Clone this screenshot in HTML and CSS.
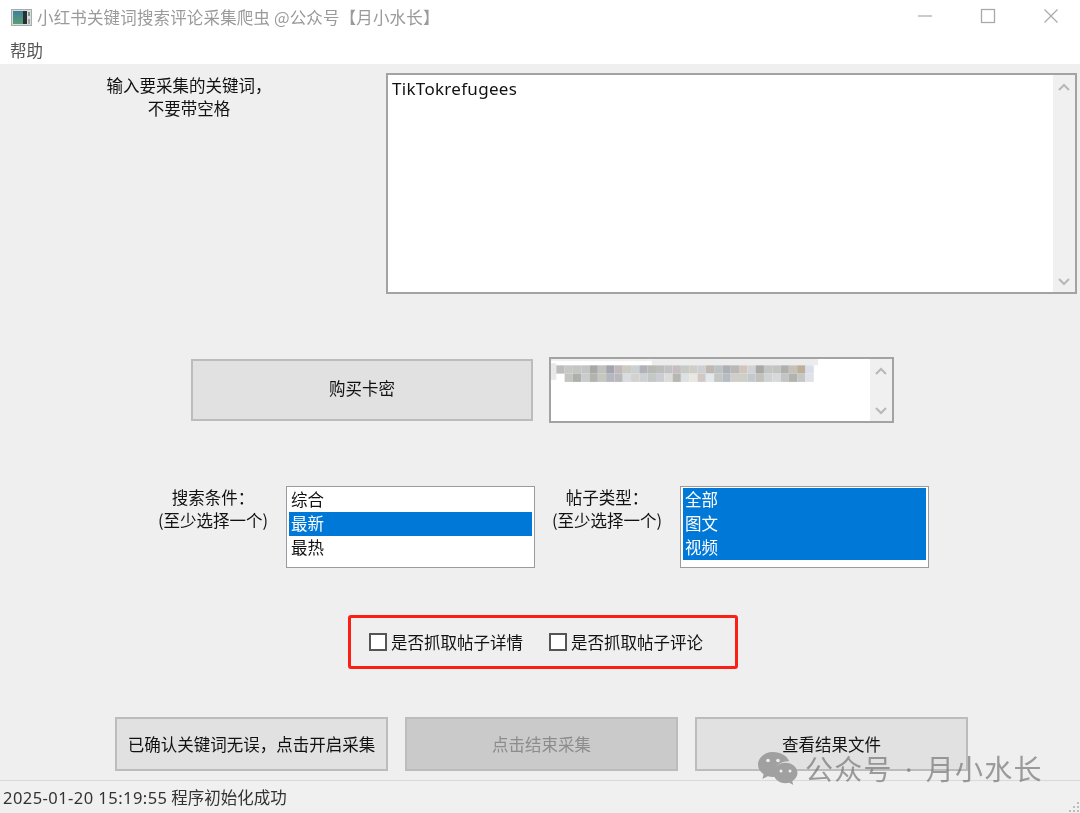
FILE: index.html
```html
<!DOCTYPE html>
<html lang="zh-CN">
<head>
<meta charset="utf-8">
<title>小红书关键词搜索评论采集爬虫</title>
<link rel="stylesheet" href="styles.css">
</head>
<body>
<div class="window">
  <header class="titlebar">
    <svg class="app-icon" width="21" height="17" viewBox="0 0 21 17"><defs><linearGradient id="ig" x1="0" y1="0" x2="0" y2="1"><stop offset="0" stop-color="#3f7fa0"/><stop offset="1" stop-color="#58a070"/></linearGradient></defs><rect x="0.5" y="0.5" width="20" height="16" fill="#d8dcdc" stroke="#a4acae"/><rect x="2" y="2" width="10" height="13" fill="url(#ig)"/><rect x="12" y="2" width="4" height="13" fill="#2a3032"/><rect x="17" y="3" width="2" height="4" fill="#7a9a8c"/><rect x="17" y="10" width="2" height="5" fill="#9aa4a0"/></svg>
    <span class="title-text">小红书关键词搜索评论采集爬虫 @公众号【月小水长】</span>
    <div class="win-controls">
      <svg width="16" height="16" viewBox="0 0 16 16"><path d="M1 8H15" stroke="#a9a9a9" stroke-width="1.2" fill="none"/></svg>
      <svg width="16" height="16" viewBox="0 0 16 16"><rect x="1.5" y="1.5" width="13" height="13" stroke="#a9a9a9" stroke-width="1.3" fill="none"/></svg>
      <svg width="16" height="16" viewBox="0 0 16 16"><path d="M1.500 1.500L14.500 14.500M14.500 1.500L1.500 14.500" stroke="#a9a9a9" stroke-width="1.2" fill="none"/></svg>
    </div>
  </header>
  <nav class="menubar"><span>帮助</span></nav>

  <main class="content">
    <section class="row row-keyword">
      <div class="caption caption-keyword">输入要采集的关键词，<br>不要带空格</div>
      <div class="field field-keyword">
        <div class="field-text">TikTokrefugees</div>
        <div class="scrollbar">
          <svg width="12" height="8" viewBox="0 0 12 8"><path d="M1 7L6 2L11 7" stroke="#b8b8b8" stroke-width="2" fill="none"/></svg>
          <svg width="12" height="8" viewBox="0 0 12 8"><path d="M1 1L6 6L11 1" stroke="#b8b8b8" stroke-width="2" fill="none"/></svg>
        </div>
      </div>
    </section>

    <section class="row row-license">
      <button class="btn btn-buy">购买卡密</button>
      <div class="field field-license">
        <svg class="mosaic" width="272" height="27" viewBox="0 0 262 26">
          <rect x="0" y="0" width="100" height="4" fill="#f0f0f0"/>
          <rect x="100" y="2" width="160" height="6" fill="#ececec"/>
          <rect x="0" y="6" width="8" height="16" fill="#e8e8e8"/>
          <g class="mosaic-cells">
            <rect x="8" y="8" width="8" height="8" fill="#c0bbbb"/><rect x="16" y="8" width="8" height="8" fill="#c6c8c5"/><rect x="24" y="8" width="8" height="8" fill="#c4c6c3"/><rect x="32" y="8" width="8" height="8" fill="#c3c5c3"/><rect x="40" y="8" width="8" height="8" fill="#a8a8a6"/><rect x="48" y="8" width="8" height="8" fill="#bfc2bf"/><rect x="56" y="8" width="8" height="8" fill="#a3a5ae"/><rect x="64" y="8" width="8" height="8" fill="#c0b8bc"/><rect x="72" y="8" width="8" height="8" fill="#cbcbc0"/><rect x="80" y="8" width="8" height="8" fill="#cad1d3"/><rect x="88" y="8" width="8" height="8" fill="#b0b1b9"/><rect x="96" y="8" width="8" height="8" fill="#b8b9b4"/><rect x="104" y="8" width="8" height="8" fill="#bcbebc"/><rect x="112" y="8" width="8" height="8" fill="#c0c2c4"/><rect x="120" y="8" width="8" height="8" fill="#c5bdc2"/><rect x="128" y="8" width="8" height="8" fill="#c6cbc8"/><rect x="136" y="8" width="8" height="8" fill="#d0ccc6"/><rect x="144" y="8" width="8" height="8" fill="#ccd0d2"/><rect x="152" y="8" width="8" height="8" fill="#c0b7b0"/><rect x="160" y="8" width="8" height="8" fill="#bcc1c4"/><rect x="168" y="8" width="8" height="8" fill="#adafb7"/><rect x="176" y="8" width="8" height="8" fill="#b8b8b4"/><rect x="184" y="8" width="8" height="8" fill="#d0c6bd"/><rect x="192" y="8" width="8" height="8" fill="#cfd3d3"/><rect x="200" y="8" width="8" height="8" fill="#a8a8a6"/><rect x="208" y="8" width="8" height="8" fill="#c3c5c3"/><rect x="216" y="8" width="8" height="8" fill="#c3c3c1"/><rect x="224" y="8" width="8" height="8" fill="#afb0ae"/><rect x="232" y="8" width="8" height="8" fill="#c3c1ba"/><rect x="240" y="8" width="8" height="8" fill="#bcae99"/><rect x="248" y="8" width="8" height="8" fill="#d8deea"/>
            <rect x="16" y="16" width="8" height="8" fill="#c3c5c1"/><rect x="24" y="16" width="8" height="8" fill="#aeb0ac"/><rect x="32" y="16" width="8" height="8" fill="#c8cccc"/><rect x="40" y="16" width="8" height="8" fill="#b2b2ae"/><rect x="48" y="16" width="8" height="8" fill="#c5c7c1"/><rect x="56" y="16" width="8" height="8" fill="#b6b6c0"/><rect x="64" y="16" width="8" height="8" fill="#b9b9bc"/><rect x="72" y="16" width="8" height="8" fill="#d9dce1"/><rect x="80" y="16" width="8" height="8" fill="#d5d1cf"/><rect x="88" y="16" width="8" height="8" fill="#cdd1d3"/><rect x="96" y="16" width="8" height="8" fill="#c3c7c5"/><rect x="104" y="16" width="8" height="8" fill="#cacdd1"/><rect x="112" y="16" width="8" height="8" fill="#dddcdd"/><rect x="120" y="16" width="8" height="8" fill="#b7b7b2"/><rect x="128" y="16" width="8" height="8" fill="#dde1e1"/><rect x="136" y="16" width="8" height="8" fill="#e8e7e3"/><rect x="144" y="16" width="8" height="8" fill="#d1c8c5"/><rect x="152" y="16" width="8" height="8" fill="#e1e9ed"/><rect x="160" y="16" width="8" height="8" fill="#c6c7c3"/><rect x="168" y="16" width="8" height="8" fill="#b6bcc4"/><rect x="176" y="16" width="8" height="8" fill="#d1cdc9"/><rect x="184" y="16" width="8" height="8" fill="#cfcfc9"/><rect x="192" y="16" width="8" height="8" fill="#c3c9cd"/><rect x="200" y="16" width="8" height="8" fill="#c3c1bb"/><rect x="208" y="16" width="8" height="8" fill="#cfd3d3"/><rect x="216" y="16" width="8" height="8" fill="#d9d9dd"/><rect x="224" y="16" width="8" height="8" fill="#c3c5c5"/><rect x="232" y="16" width="8" height="8" fill="#b2b2ae"/><rect x="240" y="16" width="8" height="8" fill="#c5c7c5"/><rect x="248" y="16" width="8" height="8" fill="#dfe1e7"/>
          </g>
        </svg>
        <div class="scrollbar">
          <svg width="12" height="8" viewBox="0 0 12 8"><path d="M1 7L6 2L11 7" stroke="#b8b8b8" stroke-width="2" fill="none"/></svg>
          <svg width="12" height="8" viewBox="0 0 12 8"><path d="M1 1L6 6L11 1" stroke="#b8b8b8" stroke-width="2" fill="none"/></svg>
        </div>
      </div>
    </section>

    <section class="row row-filters">
      <div class="caption caption-filter">搜索条件：<br>(至少选择一个)</div>
      <ul class="listbox">
        <li>综合</li>
        <li class="selected">最新</li>
        <li>最热</li>
      </ul>
      <div class="caption caption-filter caption-type">帖子类型：<br>(至少选择一个)</div>
      <ul class="listbox">
        <li class="selected">全部</li>
        <li class="selected">图文</li>
        <li class="selected">视频</li>
      </ul>
    </section>

    <section class="row row-checks">
      <div class="highlight">
        <label class="check"><span class="box"></span>是否抓取帖子详情</label>
        <label class="check"><span class="box"></span>是否抓取帖子评论</label>
      </div>
    </section>

    <section class="row row-actions">
      <button class="btn btn-action">已确认关键词无误，点击开启采集</button>
      <button class="btn btn-action btn-disabled">点击结束采集</button>
      <button class="btn btn-action">查看结果文件</button>
    </section>
  </main>

  <footer class="statusbar">
    <span><span class="stamp">2025-01-20 15:19:55</span> 程序初始化成功</span>
    <svg class="grip" width="12" height="12" viewBox="0 0 12 12"><g fill="#bdbdbd"><rect x="9" y="1" width="2" height="2"/><rect x="5" y="5" width="2" height="2"/><rect x="9" y="5" width="2" height="2"/><rect x="1" y="9" width="2" height="2"/><rect x="5" y="9" width="2" height="2"/><rect x="9" y="9" width="2" height="2"/></g></svg>
  </footer>

  <div class="watermark">
    <svg width="41" height="34" viewBox="0 0 41 34">
      <path d="M16 1C7.500 1 1 6.600 1 13.600c0 4 2.200 7.400 5.600 9.700L5.400 28l5.400-2.800c1.700.5 3.400.8 5.200.8.6 0 1.200 0 1.800-.1-.4-1.200-.6-2.500-.6-3.800 0-6.600 6.200-11.900 13.800-11.900.4 0 .8 0 1.200.1C30.300 5 23.700 1 16 1z" fill="#a0a0a0"/>
      <circle cx="11" cy="9.500" r="1.800" fill="#efefef"/><circle cx="21" cy="9.500" r="1.800" fill="#efefef"/>
      <path d="M40.500 22c0-5.700-5.500-10.300-12-10.300S16.500 16.300 16.500 22s5.500 10.300 12 10.300c1.300 0 2.600-.2 3.800-.5l4 2.200-1-3.800c3-1.900 5.200-4.900 5.200-8.200z" fill="#a0a0a0"/>
      <circle cx="24" cy="20" r="1.500" fill="#efefef"/><circle cx="33" cy="20" r="1.500" fill="#efefef"/>
    </svg>
    <span>公众号<span class="wm-dot">·</span>月小水长</span>
  </div>
</div>
</body>
</html>
```
FILE: styles.css
```css
* { box-sizing: border-box; }
html, body { margin: 0; padding: 0; }
body {
  width: 1080px;
  height: 813px;
  overflow: hidden;
  font-family: "Noto Sans CJK SC", "Noto Sans", sans-serif;
  font-size: 16.5px;
  color: #111;
}
.window {
  position: relative;
  width: 1080px;
  height: 813px;
  display: flex;
  flex-direction: column;
  background: #fff;
  filter: blur(0.3px);
}
.titlebar {
  height: 36px;
  display: flex;
  align-items: center;
  padding: 0 0 2px 11px;
  color: #9a9a9a;
  font-size: 16.5px;
  letter-spacing: 0.15px;
}
.app-icon { margin-right: 5px; flex: none; }
.title-text { white-space: nowrap; }
.win-controls {
  margin-left: auto;
  display: flex;
  gap: 47px;
  padding: 0 21px 2px 0;
}
.win-controls svg { display: block; }
.menubar {
  height: 28px;
  padding-left: 10px;
  display: flex;
  align-items: center;
  font-size: 16.5px;
  color: #555;
}
.content {
  flex: 1;
  background: #efefef;
  display: flex;
  flex-direction: column;
  padding-top: 9px;
}
.row { display: flex; flex: none; }
.caption { text-align: center; line-height: 23px; white-space: nowrap; }

.row-keyword { height: 221px; }
.caption-keyword { width: 378px; padding-top: 1px; }
.field {
  display: flex;
  background: #fff;
  border: 2px solid #a3a3a3;
}
.field-keyword { width: 691px; height: 221px; margin-left: 8px; }
.field-text {
  flex: 1;
  padding: 2px 4px;
  font-family: "Noto Sans", sans-serif;
  font-size: 17px;
  letter-spacing: 0.3px;
  line-height: 24px;
}
.scrollbar {
  width: 22px;
  background: #f0f0f0;
  display: flex;
  flex-direction: column;
  justify-content: space-between;
  align-items: center;
  padding: 8px 0 6px;
}

.row-license { height: 66px; margin-top: 63px; padding-left: 191px; align-items: center; }
.btn {
  font: inherit;
  color: #111;
  background: #e1e1e1;
  border: 2px solid #bcbcbc;
  padding: 0;
}
.btn-buy { width: 342px; height: 62px; padding-bottom: 5px; }
.field-license {
  position: relative;
  width: 345px;
  height: 66px;
  margin-left: 16px;
  justify-content: flex-end;
  overflow: hidden;
}
.mosaic { position: absolute; left: -3px; top: -2px; filter: blur(0.6px); }

.row-filters { height: 82px; margin-top: 63px; padding-left: 140px; }
.caption-filter { width: 146px; }
.caption-type { width: 145px; padding-right: 1px; }
.listbox {
  list-style: none;
  margin: 0;
  padding: 1px 2px;
  width: 249px;
  height: 82px;
  background: #fff;
  border: 1px solid #9a9aa2;
}
.listbox li {
  height: 24px;
  line-height: 22px;
  padding-left: 2px;
}
.listbox li.selected { background: #0078d7; color: #fff; }

.row-checks { margin-top: 47px; padding-left: 348px; }
.highlight {
  width: 390px;
  height: 54px;
  border: 3px solid #fb2016;
  border-radius: 3px;
  display: flex;
  align-items: center;
  padding-left: 18px;
  gap: 26px;
}
.check { display: flex; align-items: center; gap: 4px; white-space: nowrap; }
.box {
  width: 18px;
  height: 18px;
  background: #fff;
  border: 2px solid #555;
  flex: none;
}

.row-actions { margin-top: 48px; padding-left: 115px; gap: 17px; height: 54px; }
.btn-action { width: 273px; height: 54px; }
.btn-disabled { background: #cacaca; border-color: #bcbcbc; color: #8c8c8c; }

.statusbar {
  height: 33px;
  flex: none;
  background: #f0f0f0;
  border-top: 1px solid #d9d9d9;
  display: flex;
  align-items: center;
  padding-left: 3px;
  color: #333;
  position: relative;
}
.stamp { font-family: "Noto Sans", sans-serif; letter-spacing: 0.45px; }
.grip { position: absolute; right: 0; bottom: 0; }

.watermark {
  position: absolute;
  left: 757px;
  top: 751px;
  display: flex;
  align-items: center;
  gap: 7px;
  font-size: 28px;
  line-height: 20px;
  letter-spacing: 1.3px;
  color: rgba(120, 120, 120, 0.72);
  white-space: nowrap;
}
.wm-dot { font-family: "Noto Sans", sans-serif; margin: 0 12px; }
```
